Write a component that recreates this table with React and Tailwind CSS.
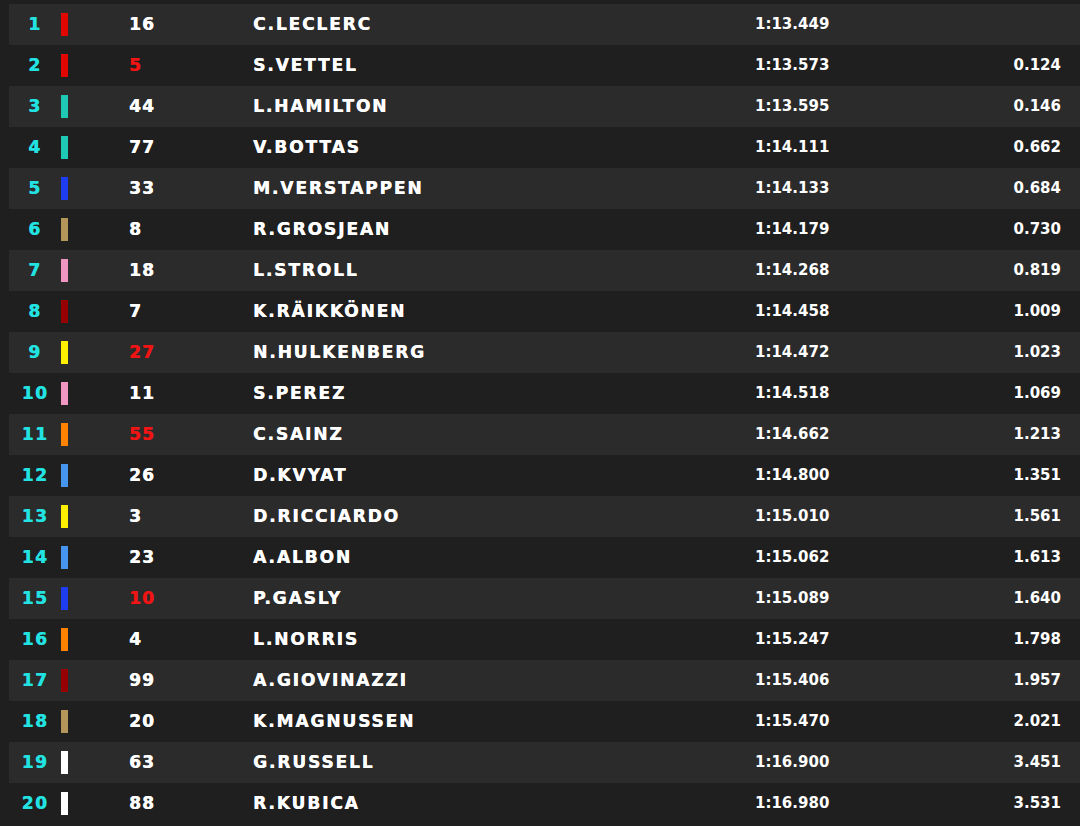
import React from "react";

const rows = [
  [1, "#e10600", "16", false, "C.LECLERC", "1:13.449", ""],
  [2, "#e10600", "5", true, "S.VETTEL", "1:13.573", "0.124"],
  [3, "#1ec8b4", "44", false, "L.HAMILTON", "1:13.595", "0.146"],
  [4, "#1ec8b4", "77", false, "V.BOTTAS", "1:14.111", "0.662"],
  [5, "#1e3cf0", "33", false, "M.VERSTAPPEN", "1:14.133", "0.684"],
  [6, "#b4965a", "8", false, "R.GROSJEAN", "1:14.179", "0.730"],
  [7, "#f096c3", "18", false, "L.STROLL", "1:14.268", "0.819"],
  [8, "#960000", "7", false, "K.RÄIKKÖNEN", "1:14.458", "1.009"],
  [9, "#fff000", "27", true, "N.HULKENBERG", "1:14.472", "1.023"],
  [10, "#f096c3", "11", false, "S.PEREZ", "1:14.518", "1.069"],
  [11, "#ff8200", "55", true, "C.SAINZ", "1:14.662", "1.213"],
  [12, "#4696f0", "26", false, "D.KVYAT", "1:14.800", "1.351"],
  [13, "#fff000", "3", false, "D.RICCIARDO", "1:15.010", "1.561"],
  [14, "#4696f0", "23", false, "A.ALBON", "1:15.062", "1.613"],
  [15, "#1e3cf0", "10", true, "P.GASLY", "1:15.089", "1.640"],
  [16, "#ff8200", "4", false, "L.NORRIS", "1:15.247", "1.798"],
  [17, "#960000", "99", false, "A.GIOVINAZZI", "1:15.406", "1.957"],
  [18, "#b4965a", "20", false, "K.MAGNUSSEN", "1:15.470", "2.021"],
  [19, "#ffffff", "63", false, "G.RUSSELL", "1:16.900", "3.451"],
  [20, "#ffffff", "88", false, "R.KUBICA", "1:16.980", "3.531"],
];

export default function App() {
  return (
    <div
      className="w-[1080px] h-[826px] bg-[#1f1f1f] pt-[4px] pl-[9px] overflow-hidden"
      style={{ fontFamily: '"DejaVu Sans", "Liberation Sans", sans-serif' }}
    >
      {rows.map(([pos, color, num, red, name, time, gap], i) => (
        <div
          key={pos}
          className={`flex items-center h-[41px] ${i % 2 === 0 ? "bg-[#2b2b2b]" : "bg-transparent"}`}
        >
          <div className="w-[52px] text-center text-[17px] font-bold text-[#22e2e2] tracking-[1.5px] [text-shadow:0.4px_0_0_currentColor]">
            {pos}
          </div>
          <div className="w-[7px] h-[23px]" style={{ backgroundColor: color }} />
          <div
            className={`ml-[61px] w-[124px] text-[17px] font-bold tracking-[1.2px] [text-shadow:0.4px_0_0_currentColor] ${red ? "text-[#f01414]" : "text-white"}`}
          >
            {num}
          </div>
          <div className="w-[502px] text-[17px] font-bold text-white tracking-[1.9px] [text-shadow:0.4px_0_0_currentColor]">
            {name}
          </div>
          <div className="w-[200px] text-[15px] font-bold text-white">{time}</div>
          <div className="flex-1 text-right pr-[19px] text-[15px] font-bold text-white">
            {gap}
          </div>
        </div>
      ))}
    </div>
  );
}
